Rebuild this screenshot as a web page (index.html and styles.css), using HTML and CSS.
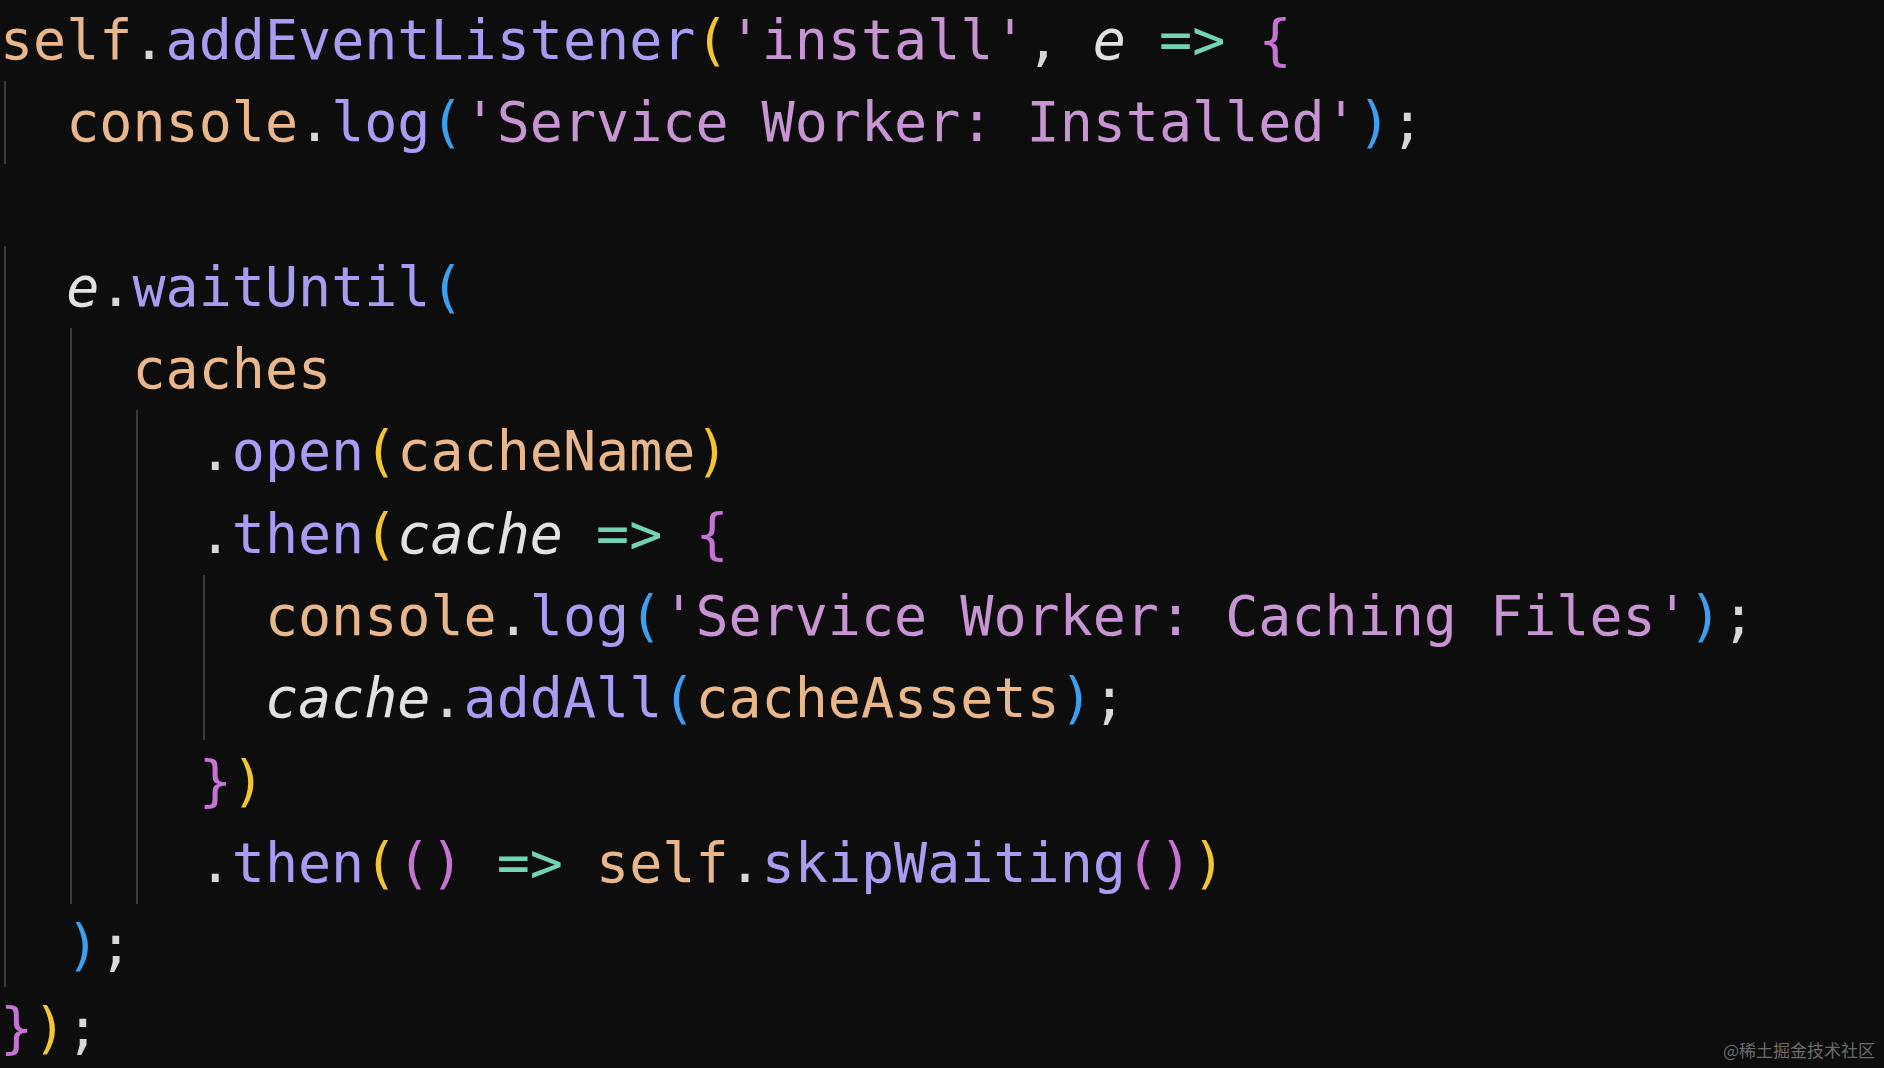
FILE: index.html
```html
<!DOCTYPE html>
<html lang="en">
<head>
<meta charset="utf-8">
<title>Service Worker install</title>
<link rel="stylesheet" href="styles.css">
</head>
<body>
<main class="editor">
  <div class="line"><span class="v">self</span><span class="p">.</span><span class="f">addEventListener</span><span class="b1">(</span><span class="s">'install'</span><span class="p">, </span><span class="prm">e</span> <span class="op">=&gt;</span> <span class="b2">{</span></div>
  <div class="block">
    <div class="line"><span class="v">console</span><span class="p">.</span><span class="f">log</span><span class="b3">(</span><span class="s">'Service Worker: Installed'</span><span class="b3">)</span><span class="p">;</span></div>
  </div>
  <div class="line"> </div>
  <div class="block">
    <div class="line"><span class="prm">e</span><span class="p">.</span><span class="f">waitUntil</span><span class="b3">(</span></div>
    <div class="block">
      <div class="line"><span class="v">caches</span></div>
      <div class="block">
        <div class="line"><span class="p">.</span><span class="f">open</span><span class="b1">(</span><span class="v">cacheName</span><span class="b1">)</span></div>
        <div class="line"><span class="p">.</span><span class="f">then</span><span class="b1">(</span><span class="prm">cache</span> <span class="op">=&gt;</span> <span class="b2">{</span></div>
        <div class="block">
          <div class="line"><span class="v">console</span><span class="p">.</span><span class="f">log</span><span class="b3">(</span><span class="s">'Service Worker: Caching Files'</span><span class="b3">)</span><span class="p">;</span></div>
          <div class="line"><span class="prm">cache</span><span class="p">.</span><span class="f">addAll</span><span class="b3">(</span><span class="v">cacheAssets</span><span class="b3">)</span><span class="p">;</span></div>
        </div>
        <div class="line"><span class="b2">}</span><span class="b1">)</span></div>
        <div class="line"><span class="p">.</span><span class="f">then</span><span class="b1">(</span><span class="b2">()</span> <span class="op">=&gt;</span> <span class="v">self</span><span class="p">.</span><span class="f">skipWaiting</span><span class="b2">()</span><span class="b1">)</span></div>
      </div>
    </div>
    <div class="line"><span class="b3">)</span><span class="p">;</span></div>
  </div>
  <div class="line"><span class="b2">}</span><span class="b1">)</span><span class="p">;</span></div>
</main>
<div class="watermark">@稀土掘金技术社区</div>
</body>
</html>
```

FILE: styles.css
```css
html, body {
  margin: 0;
  padding: 0;
  background: #0d0d0d;
  width: 1884px;
  height: 1068px;
  overflow: hidden;
}

.editor {
  margin-top: -1px;
  font-family: "DejaVu Sans Mono", monospace;
  font-size: 55px;
  line-height: 82.3px;
  color: #d6d6d6;
}

.line {
  white-space: pre;
  height: 82.3px;
}

.block {
  margin-left: 4px;
  border-left: 2px solid #3a3a3a;
  padding-left: calc(2ch - 6px);
}

.v { color: #e9b78b; }
.f { color: #a79df2; }
.s { color: #c894d3; }
.p { color: #d8d8d8; }
.prm { color: #e2e2e2; font-style: italic; }
.op { color: #72d4b3; }
.b1 { color: #f2c531; }
.b2 { color: #c674d3; }
.b3 { color: #3d9ff0; }

.watermark {
  position: absolute;
  right: 9px;
  bottom: 8px;
  font-family: "Noto Sans CJK SC", sans-serif;
  font-size: 17px;
  line-height: 20px;
  color: #6b6b6b;
}
```
